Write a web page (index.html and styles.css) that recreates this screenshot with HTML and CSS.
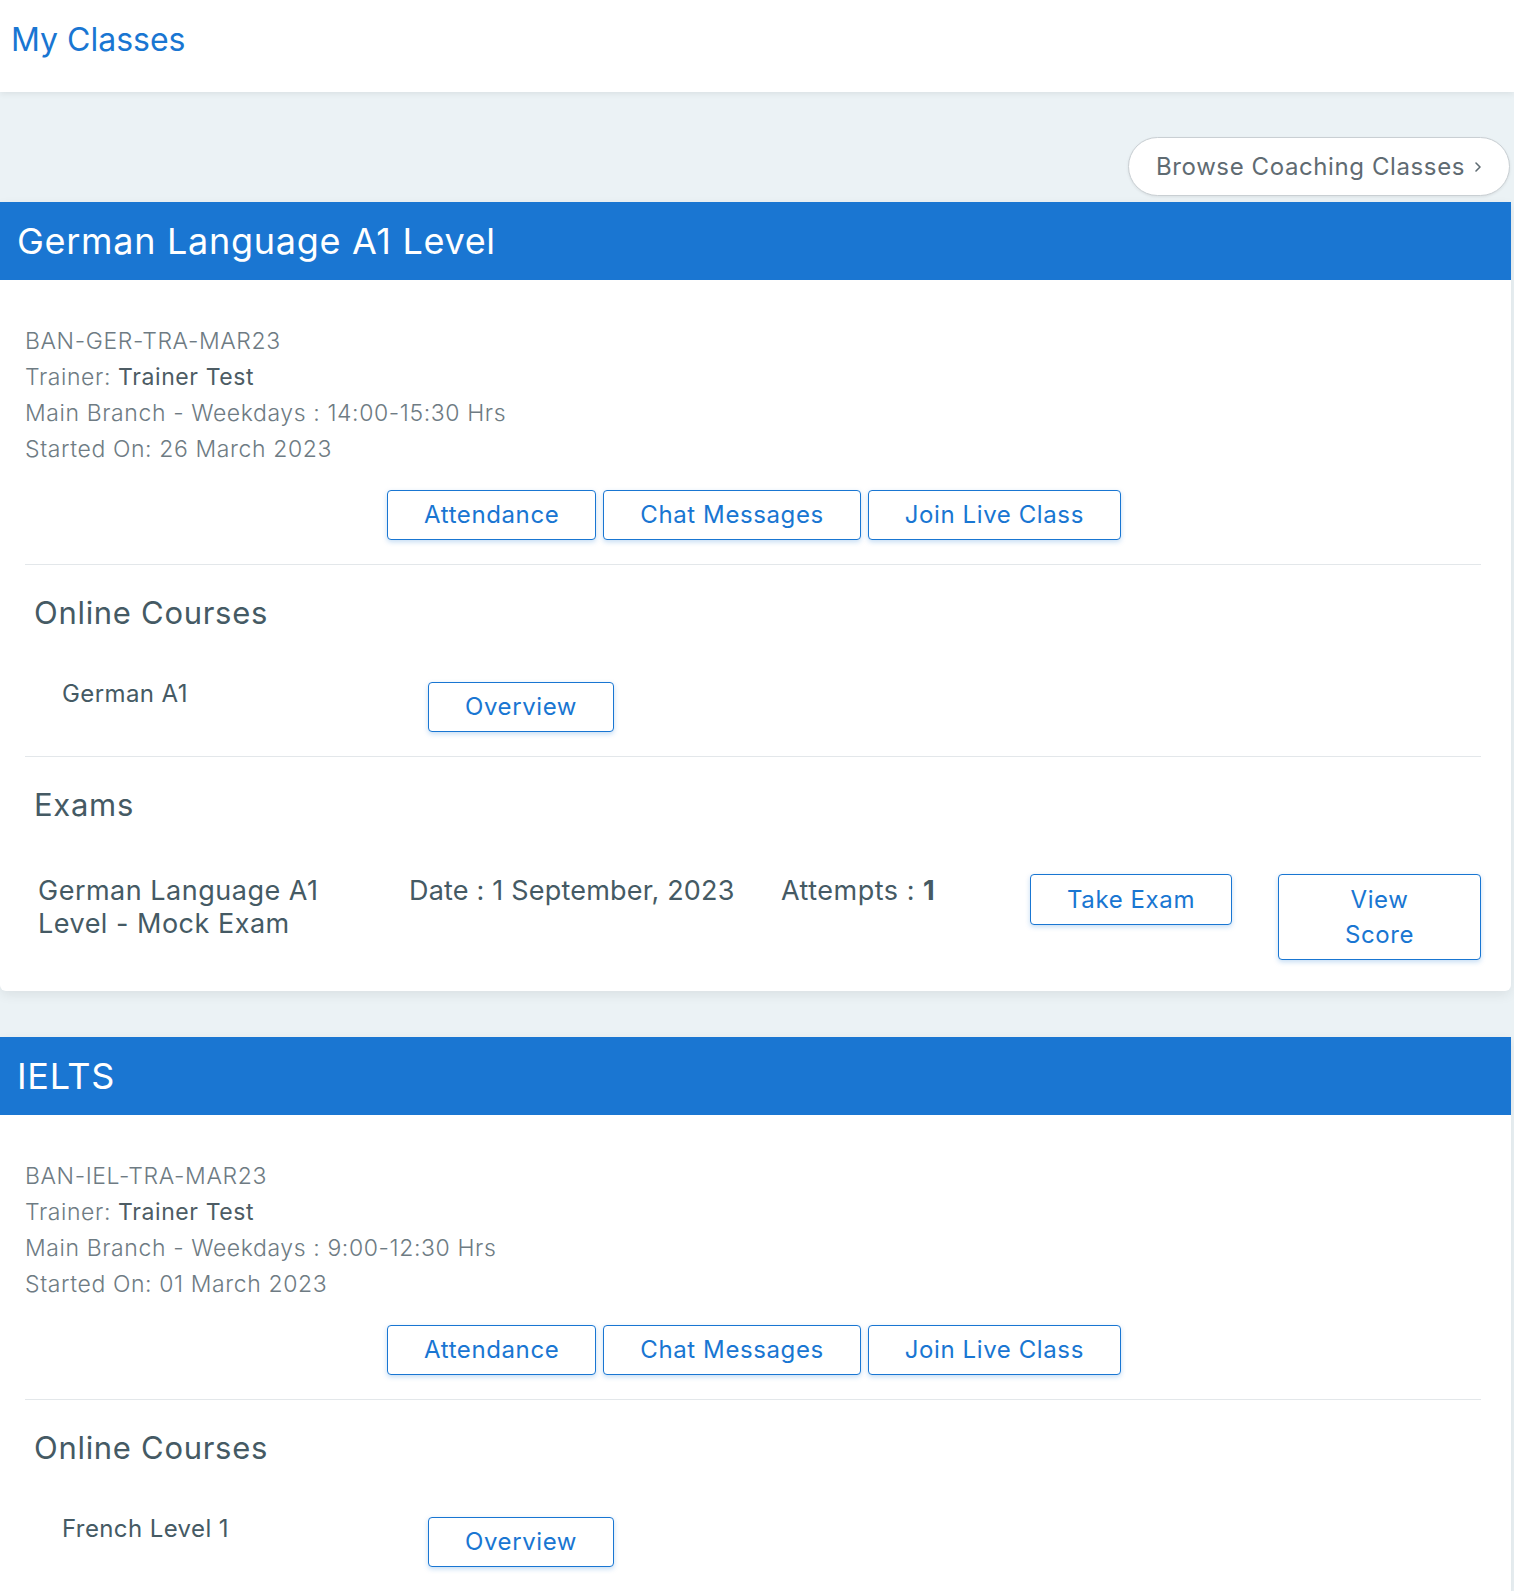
FILE: index.html
```html
<!DOCTYPE html>
<html lang="en">
<head>
    <meta charset="UTF-8">
    <meta name="viewport" content="width=device-width, initial-scale=1.0">
    <title>My Classes</title>
    <link rel="stylesheet" href="styles.css">
</head>
<body>

<header class="page-header">
    <h1>My Classes</h1>
</header>

<main class="classes">
    <div class="browse-bar">
        <a class="browse-btn" href="#">Browse Coaching Classes
            <svg width="10" height="14" viewBox="0 0 10 14"><path d="M3 3l4 4-4 4" fill="none" stroke="#5f6b72" stroke-width="1.6" stroke-linecap="round" stroke-linejoin="round"/></svg>
        </a>
    </div>

    <!-- Класс 1 -->
    <div class="class-card">
        <h2 class="class-title">German Language A1 Level</h2>
        <div class="class-body">
            <div class="batch-info">
                <p>BAN-GER-TRA-MAR23</p>
                <p>Trainer: <span class="trainer">Trainer Test</span></p>
                <p>Main Branch - Weekdays : 14:00-15:30 Hrs</p>
                <p>Started On: 26 March 2023</p>
            </div>
            <div class="class-actions">
                <button class="btn">Attendance</button>
                <button class="btn">Chat Messages</button>
                <button class="btn">Join Live Class</button>
            </div>

            <div class="section">
                <h3>Online Courses</h3>
                <div class="course-row">
                    <span class="course-name">German A1</span>
                    <button class="btn">Overview</button>
                </div>
            </div>

            <div class="section">
                <h3>Exams</h3>
                <div class="exam-row">
                    <div class="exam-name">German Language A1 Level - Mock Exam</div>
                    <div class="exam-date">Date : 1 September, 2023</div>
                    <div>Attempts : <b>1</b></div>
                    <div><button class="btn">Take Exam</button></div>
                    <div><button class="btn">View Score</button></div>
                </div>
            </div>
        </div>
    </div>

    <!-- Класс 2 -->
    <div class="class-card">
        <h2 class="class-title">IELTS</h2>
        <div class="class-body">
            <div class="batch-info">
                <p>BAN-IEL-TRA-MAR23</p>
                <p>Trainer: <span class="trainer">Trainer Test</span></p>
                <p>Main Branch - Weekdays : 9:00-12:30 Hrs</p>
                <p>Started On: 01 March 2023</p>
            </div>
            <div class="class-actions">
                <button class="btn">Attendance</button>
                <button class="btn">Chat Messages</button>
                <button class="btn">Join Live Class</button>
            </div>

            <div class="section">
                <h3>Online Courses</h3>
                <div class="course-row">
                    <span class="course-name">French Level 1</span>
                    <button class="btn">Overview</button>
                </div>
            </div>
        </div>
    </div>
</main>

</body>
</html>
```

FILE: styles.css
```css
body {
    margin: 0;
    font-family: Inter, "Open Sans", sans-serif;
    background: #ebf2f5;
    color: #455a64;
}
.page-header {
    background: #fff;
    height: 92px;
    box-shadow: 0 2px 6px rgba(0, 0, 0, 0.07);
    position: relative;
}
.page-header h1 {
    margin: 0;
    padding-left: 11px;
    line-height: 80px;
    font-size: 32px;
    font-weight: 400;
    color: #1976d2;
}
.classes {
    padding: 0 3px 0 0;
}
.browse-bar {
    display: flex;
    justify-content: flex-end;
    padding: 45px 1px 6px 0;
}
.browse-btn {
    display: flex;
    align-items: center;
    gap: 8px;
    height: 57px;
    padding: 0 26px 0 27px;
    background: #fff;
    border: 1px solid #c9cfd3;
    border-radius: 30px;
    box-shadow: 0 1px 3px rgba(0, 0, 0, 0.08);
    color: #5f6b72;
    font-size: 24px;
    letter-spacing: 0.6px;
    text-decoration: none;
}
.class-card {
    background: #fff;
    border-radius: 0 0 6px 6px;
    box-shadow: 0 4px 12px rgba(0, 0, 0, 0.07);
    margin-bottom: 46px;
}
.class-title {
    margin: 0;
    height: 78px;
    line-height: 78px;
    padding-left: 17px;
    background: #1a76d2;
    color: #fff;
    font-size: 36px;
    letter-spacing: 0.7px;
    font-weight: 400;
}
.class-body {
    padding: 43px 30px 31px 25px;
}
.batch-info p {
    margin: 0;
    font-size: 23px;
    letter-spacing: 0.6px;
    line-height: 36px;
    font-weight: 300;
    color: #6e7b83;
}
.batch-info .trainer {
    font-weight: 400;
    color: #4d5c64;
}
.class-actions {
    margin-top: 23px;
    display: flex;
    justify-content: center;
    gap: 7px;
    padding-left: 2px;
}
.btn {
    font-family: inherit;
    font-size: 24px;
    letter-spacing: 0.6px;
    line-height: 34px;
    padding: 7px 36px;
    color: #1976d2;
    background: #fff;
    border: 1px solid #1976d2;
    border-radius: 4px;
    box-shadow: 0 2px 5px rgba(25, 118, 210, 0.25);
    cursor: pointer;
}
.section {
    margin-top: 24px;
    padding-top: 30px;
    border-top: 1px solid #e3e7ea;
}
.section h3 {
    margin: 0 0 51px;
    padding-left: 9px;
    font-size: 31px;
    letter-spacing: 0.7px;
    line-height: 36px;
    font-weight: 400;
    color: #455a64;
}
.course-row {
    display: flex;
    align-items: flex-start;
    padding-left: 37px;
}
.course-name {
    width: 366px;
    font-size: 24px;
    letter-spacing: 0.4px;
    line-height: 24px;
    color: #455a64;
}
.exam-row {
    display: grid;
    grid-template-columns: 371px 372px 249px 248px 1fr;
    align-items: start;
    padding-left: 13px;
    font-size: 27px;
    letter-spacing: 0.5px;
    line-height: 33px;
}
.exam-row .exam-name {
    padding-right: 40px;
}
.exam-row .exam-date {
    letter-spacing: 0.2px;
}
.exam-row .btn {
    max-width: 100%;
    line-height: 35px;
}
```
